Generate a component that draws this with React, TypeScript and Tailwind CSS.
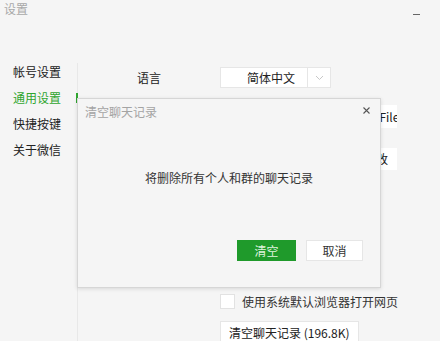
import React from "react";

const font = { fontFamily: '"Noto Sans CJK SC", "Noto Sans", sans-serif' };

const NavItem = ({ label, active }: { label: string; active?: boolean }) => (
  <div
    className={`h-[26px] leading-[26px] text-[12px] ${
      active ? "text-[#2fa52f]" : "text-[#222]"
    }`}
  >
    {label}
  </div>
);

export default function App() {
  return (
    <div
      style={font}
      className="relative w-[440px] h-[341px] bg-[#f5f5f5] overflow-hidden flex flex-col select-none"
    >
      {/* title bar */}
      <div className="h-[58px] flex items-start justify-between shrink-0">
        <span className="ml-[4px] mt-[1px] text-[12px] leading-[16px] text-[#a8a8a8]">
          设置
        </span>
        <span className="mr-[20px] mt-[14px] block w-[7px] h-[1px] bg-[#666]" />
      </div>

      <div className="flex flex-1">
        {/* sidebar */}
        <div className="w-[77px] pl-[13px] pt-[1px] shrink-0">
          <NavItem label="帐号设置" />
          <NavItem label="通用设置" active />
          <NavItem label="快捷按键" />
          <NavItem label="关于微信" />
        </div>

        {/* content */}
        <div className="relative flex-1 mt-[5px] border-l border-[#e8e8e8] flex flex-col">
          <span className="absolute left-[-2px] top-[30px] w-[2px] h-[10px] bg-[#2fa52f]" />

          <div className="mt-[4px] flex items-center h-[21px]">
            <span className="w-[142px] pl-[59px] text-[12px] text-[#222]">语言</span>
            <div className="flex h-[21px] w-[111px] bg-white border border-[#e6e6e6]">
              <span className="w-[86px] pl-[14px] text-center text-[12px] leading-[19px] text-[#222]">
                简体中文
              </span>
              <span className="flex-1 border-l border-[#e6e6e6] flex items-center justify-center">
                <svg width="9" height="6" viewBox="0 0 9 6">
                  <path d="M1 1l3.5 3.5L8 1" fill="none" stroke="#c8c8c8" strokeWidth="1" />
                </svg>
              </span>
            </div>
          </div>

          <div className="mt-[17px] h-[23px] flex">
            <div className="ml-[142px] w-[177px] h-[23px] bg-white overflow-hidden flex justify-end">
              <span className="mr-[-8px] whitespace-nowrap text-[12px] leading-[23px] text-[#222]">
                D:\Documents\WeChat Files
              </span>
            </div>
          </div>

          <div className="mt-[20px] h-[22px] flex">
            <div className="ml-[273px] w-[46px] h-[22px] bg-white pl-[13px] text-left text-[12px] leading-[22px] text-[#222] overflow-hidden whitespace-nowrap">
              更改
            </div>
          </div>

          <div className="mt-[124px] h-[15px] flex items-center">
            <span className="ml-[142px] w-[15px] h-[15px] bg-white border border-[#e2e2e2]" />
            <span className="ml-[7px] text-[12px] text-[#333]">使用系统默认浏览器打开网页</span>
          </div>

          <div className="mt-[12px] flex">
            <div className="ml-[142px] h-[24px] px-[8px] bg-white border border-[#e6e6e6] text-[12px] leading-[22px] text-[#222]">
              清空聊天记录 (196.8K)
            </div>
          </div>
        </div>
      </div>

      {/* dialog */}
      <div className="absolute left-[77px] top-[98px] w-[304px] h-[190px] bg-[#f5f5f5] border border-[#d6d6d6] shadow-[0_1px_4px_rgba(0,0,0,0.12)] flex flex-col">
        <div className="flex justify-between items-start">
          <span className="ml-[7px] mt-[4px] text-[12px] leading-[18px] text-[#a4a4a4]">清空聊天记录</span>
          <svg className="mr-[10px] mt-[8px]" width="7" height="7" viewBox="0 0 7 7">
            <path d="M0.5 0.5l6 6M6.5 0.5l-6 6" stroke="#555" strokeWidth="1.1" />
          </svg>
        </div>
        <div className="mt-[48px] text-center text-[12px] leading-[18px] text-[#333]">
          将删除所有个人和群的聊天记录
        </div>
        <div className="mt-[53px] flex justify-end gap-[10px] pr-[17px]">
          <div className="w-[59px] h-[21px] bg-[#1f9a2b] text-center text-[12px] leading-[21px] text-[#dff3df]">
            清空
          </div>
          <div className="w-[57px] h-[21px] bg-white border border-[#e6e6e6] text-center text-[12px] leading-[19px] text-[#333]">
            取消
          </div>
        </div>
      </div>
    </div>
  );
}
